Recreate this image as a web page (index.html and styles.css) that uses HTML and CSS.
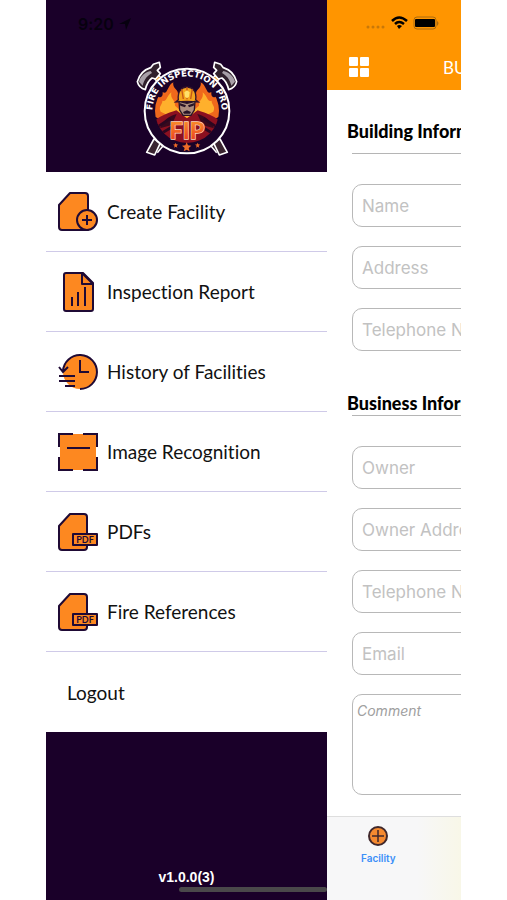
FILE: index.html
```
<!DOCTYPE html>
<html lang="en">
<head>
  <meta charset="UTF-8" />
  <meta name="viewport" content="width=device-width, initial-scale=1.0" />
  <title>Fire Inspection Pro</title>
  <link rel="stylesheet" href="styles.css">
</head>
<body>
  <div class="phone">
    <nav class="drawer">
      <header class="drawer-header">
        <div class="clock">
          <span>9:20</span>
          <svg width="12" height="12" viewBox="0 0 12 12"><path d="M0 6 12 0 7 12 6 6z" fill="#07000f"/></svg>
        </div>
        <svg class="logo" viewBox="0 0 342 330" role="img" aria-label="Fire Inspection Pro">
          <defs>
            <path id="ring" d="M72 200A104 104 0 1 1 270 200"/>
            <clipPath id="disc"><circle cx="171" cy="168" r="96"/></clipPath>
            <linearGradient id="flame" x1="0" y1="0" x2="0" y2="1">
              <stop offset="0" stop-color="#ffa02e"/>
              <stop offset="1" stop-color="#e8331b"/>
            </linearGradient>
          </defs>
          <!-- crossed axes -->
          <g stroke-linejoin="round">
            <g id="axe">
              <path d="M80 66 266 288" stroke="#fff" stroke-width="20"/>
              <path d="M80 66 266 288" stroke="#3a2430" stroke-width="11"/>
              <path d="M77 63 96 86" stroke="#f5a020" stroke-width="12"/>
              <path d="M250 262 268 300 292 292 270 252z" fill="#3a2430" stroke="#fff" stroke-width="5"/>
              <path d="M70 28 88 22 91 37 82 46 91 56 77 72 66 69C54 78 49 90 46 104 34 101 25 93 22 80 28 60 42 44 62 38z" fill="#30202c" stroke="#fff" stroke-width="5"/>
              <path d="M27 80C32 62 46 51 62 48L66 54C52 62 43 72 38 92z" fill="#a79fa7"/>
            </g>
            <use href="#axe" transform="matrix(-1 0 0 1 342 0)"/>
          </g>
          <circle cx="171" cy="168" r="127" fill="#1a0329" stroke="#fff" stroke-width="6"/>
          <g clip-path="url(#disc)">
            <path d="M75 185C65 150 84 142 80 122 94 132 99 125 98 111 112 122 111 93 130 80 126 103 146 101 144 120L171 150 198 120C196 101 216 103 212 80 231 93 230 122 244 111 243 125 248 132 262 122 258 142 277 150 267 185L210 215H132z" fill="#ef681c"/>
            <path d="M92 170C84 153 98 149 97 137 111 142 108 126 124 112 120 133 136 134 135 152L171 184 207 152C206 134 222 133 218 112 234 126 231 142 245 137 244 149 258 153 250 170L210 190H132z" fill="#ffb02c"/>
            <path d="M60 225C67 192 95 181 139 166L171 190 203 166C247 181 275 192 282 225L250 270H92z" fill="#8b1020"/>
            <path d="M90 220C100 195 120 181 140 177L125 210zM252 220C242 195 222 181 202 177L217 210z" fill="#39091d"/>
            <path d="M76 220 121 190M266 220 221 190M86 240 126 216M256 240 216 216" stroke="#2b0720" stroke-width="8"/>
          </g>
          <path d="M145 134C142 108 156 96 171 96S201 108 197 134L205 141 171 139 137 141z" fill="#f5a51e" stroke="#34132a" stroke-width="4"/>
          <path d="M171 96V133M155 102 160 132M187 102 182 132" stroke="#c45518" stroke-width="4"/>
          <path d="M163 112 171 106 179 112 177 125 171 130 165 125z" fill="#ffe06a"/>
          <path d="M147 139 171 145 195 139 193 165 183 181H159L149 165z" fill="#ac8d7e" stroke="#281426" stroke-width="4"/>
          <path d="M149 144 168 151 165 157 151 152zM193 144 174 151 177 157 191 152zM159 171 171 166 183 171 180 176H162z" fill="#281426"/>
          <text class="ring-text"><textPath href="#ring" startOffset="50%">FIRE INSPECTION PRO</textPath></text>
          <text class="fip" x="171" y="251">FIP</text>
          <g fill="#ef6c28">
            <path d="m170 262 4 9 10 1-8 7 3 10-9-5-9 5 3-10-8-7 10-1z"/>
            <path d="m137 263 2 5 6 1-5 3 2 6-5-3-5 3 2-6-5-3 6-1zM203 263l2 5 6 1-5 3 2 6-5-3-5 3 2-6-5-3 6-1z"/>
          </g>
        </svg>
      </header>

      <ul class="menu">
        <li><a href="#create">
          <svg class="icon" viewBox="0 0 40 40">
            <path class="shape" d="M12 1H27Q30 1 30 4V38H4Q1 38 1 35V13z"/>
            <circle class="shape" cx="29" cy="28" r="10"/>
            <path class="stroke" d="M29 23V33M24 28H34"/>
          </svg>Create Facility</a></li>
        <li><a href="#report">
          <svg class="icon" viewBox="0 0 40 40">
            <path class="shape" d="M8 1H25L35 11V37Q35 39 33 39H8Q6 39 6 37V3Q6 1 8 1z"/>
            <path class="shape" d="M24 1V12H35z"/>
            <path class="stroke" d="M14 25V34M20 20V34M27 15V34"/>
          </svg>Inspection Report</a></li>
        <li><a href="#history">
          <svg class="icon" viewBox="0 0 40 40">
            <circle cx="22" cy="20" r="17" fill="#fd8820"/>
            <path class="stroke" d="M5 19A17 17 0 1 1 22 37M1 15 5 20 10 15M22 8V20H31M1 24H17M1 29H17M7 34H17"/>
          </svg>History of Facilities</a></li>
        <li><a href="#image">
          <svg class="icon" viewBox="0 0 40 40">
            <path d="M2 2H38V38H2z" fill="#fd8820"/>
            <path class="stroke" d="M15 2H1V15M25 2H39V15M1 25V38H15M25 38H39V25M9 16H32"/>
          </svg>Image Recognition</a></li>
        <li><a href="#pdfs">
          <svg class="icon" viewBox="0 0 40 40">
            <path class="shape" d="M12 2H26Q29 2 29 5V35Q29 38 26 38H4Q1 38 1 35V14z"/>
            <path class="shape" d="M15 22H39V33H15z"/>
            <text class="pdf" x="27" y="31">PDF</text>
          </svg>PDFs</a></li>
        <li><a href="#references">
          <svg class="icon" viewBox="0 0 40 40">
            <path class="shape" d="M12 2H26Q29 2 29 5V35Q29 38 26 38H4Q1 38 1 35V14z"/>
            <path class="shape" d="M15 22H39V33H15z"/>
            <text class="pdf" x="27" y="31">PDF</text>
          </svg>Fire References</a></li>
        <li><a class="logout" href="#logout">Logout</a></li>
      </ul>

      <footer class="version">v1.0.0(3)</footer>
      <div class="home-bar"></div>
    </nav>

    <main class="page">
      <header class="topbar">
        <div class="status">
          <svg width="74" height="16" viewBox="0 0 74 16">
            <g fill="#c87808"><circle cx="2" cy="12" r="1.5"/><circle cx="7" cy="12" r="1.5"/><circle cx="12" cy="12" r="1.5"/><circle cx="17" cy="12" r="1.5"/></g>
            <g fill="none" stroke="#000" stroke-width="2.5"><path d="M26 6Q33 -1 41 6M29 9Q33 5 38 9"/></g>
            <path d="M31 11Q33 9 36 11L33 14z"/>
            <rect x="48" y="2" width="22" height="12" rx="3" fill="none" stroke="#a96a10" stroke-width="1"/>
            <rect x="49" y="4" width="20" height="8" rx="1"/>
            <path d="M71 6Q74 8 71 11z" fill="#a96a10"/>
          </svg>
        </div>
        <div class="titlebar">
          <button class="grid-button" type="button" aria-label="Menu">
            <svg width="20" height="20" viewBox="0 0 20 20" fill="#fff"><rect width="9" height="9" rx="1"/><rect x="11" width="9" height="9" rx="1"/><rect y="11" width="9" height="9" rx="1"/><rect x="11" y="11" width="9" height="9" rx="1"/></svg>
          </button>
          <h1>BUILDING</h1>
        </div>
      </header>

      <form class="form">
        <h2>Building Information</h2>
        <div class="fields">
          <input type="text" placeholder="Name" aria-label="Name">
          <input type="text" placeholder="Address" aria-label="Address">
          <input type="tel" placeholder="Telephone Number" aria-label="Telephone Number">
        </div>
        <h2 class="tight">Business Information</h2>
        <div class="fields">
          <input type="text" placeholder="Owner" aria-label="Owner">
          <input type="text" placeholder="Owner Address" aria-label="Owner Address">
          <input type="tel" placeholder="Telephone Number" aria-label="Owner Telephone Number">
          <input type="email" placeholder="Email" aria-label="Email">
          <textarea placeholder="Comment" aria-label="Comment"></textarea>
        </div>
      </form>

      <nav class="tabbar">
        <a class="tab" href="#facility">
          <svg width="22" height="22" viewBox="0 0 22 22"><circle cx="11" cy="11" r="9" fill="#f58a30" stroke="#40282c" stroke-width="2"/><path d="M11 5V17M5 11H17" stroke="#40282c" stroke-width="1.5"/></svg>
          Facility
        </a>
      </nav>
    </main>
  </div>
</body>
</html>
```

FILE: styles.css
```
* {
  box-sizing: border-box;
}
body {
  margin: 0;
  padding: 0 46px;
  background: #fff;
  font-family: Lato, "Liberation Sans", sans-serif;
  font-variant-ligatures: none;
  color: #111;
}
.phone {
  display: flex;
  min-height: 100vh;
  overflow: hidden;
}

/* side menu */
.drawer {
  position: relative;
  display: flex;
  flex-direction: column;
  flex: 0 0 281px;
  background: #1a0029;
}
.drawer-header {
  display: flex;
  flex-direction: column;
  height: 172px;
  padding-top: 12px;
}
.clock {
  display: flex;
  align-items: center;
  gap: 5px;
  height: 24px;
  padding-left: 32px;
  font-family: Inter, sans-serif;
  font-size: 16px;
  font-weight: 600;
  color: #07000f;
}
.logo {
  width: 114px;
  height: 110px;
  margin: 19px auto 0;
}
.ring-text {
  font-family: "DejaVu Sans", sans-serif;
  font-size: 26px;
  font-weight: 700;
  fill: #fff;
  text-anchor: middle;
}
.fip {
  font-size: 70px;
  font-weight: 900;
  fill: url(#flame);
  stroke: #f9d9bd;
  stroke-width: 4px;
  paint-order: stroke;
  text-anchor: middle;
}
.menu {
  margin: 0;
  padding: 0;
  list-style: none;
  background: #fff;
}
.menu li {
  height: 80px;
  border-bottom: 1px solid #cfcae8;
}
.menu li:last-child {
  border-bottom: none;
}
.menu a {
  display: flex;
  align-items: center;
  gap: 9px;
  height: 100%;
  padding-left: 12px;
  font-size: 19px;
  color: #111;
  text-decoration: none;
}
.menu .logout {
  padding-left: 21px;
}
.icon {
  width: 40px;
  height: 40px;
  overflow: visible;
}
.shape {
  fill: #fd8820;
  stroke: #1f0a35;
  stroke-width: 2px;
  stroke-linejoin: round;
}
.stroke {
  fill: none;
  stroke: #1f0a35;
  stroke-width: 2px;
}
.pdf {
  font-size: 9px;
  font-weight: 700;
  fill: #1f0a35;
  text-anchor: middle;
}
.version {
  margin-top: auto;
  padding-bottom: 15px;
  font-family: "Liberation Sans", sans-serif;
  font-size: 14px;
  font-weight: 700;
  line-height: 16px;
  color: #fff;
  text-align: center;
}
.home-bar {
  position: absolute;
  right: 0;
  bottom: 8px;
  width: 148px;
  height: 5px;
  border-radius: 3px;
  background: #4a484a;
}

/* page pushed aside by the menu */
.page {
  display: flex;
  flex-direction: column;
  flex: 0 0 100%;
}
.topbar {
  height: 90px;
  background: #ff9500;
}
.status {
  height: 46px;
  padding: 15px 0 0 39px;
}
.status svg {
  display: block;
}
.titlebar {
  display: flex;
  align-items: center;
  gap: 74px;
  height: 42px;
  padding-left: 22px;
}
.grid-button {
  display: flex;
  padding: 0;
  border: none;
  background: none;
}
.titlebar h1 {
  margin: 0;
  font-size: 17px;
  font-weight: 400;
  color: #fff;
}
.form {
  padding: 29px 25px 20px;
}
.form h2 {
  margin: 0 0 30px;
  padding-bottom: 10px;
  border-bottom: 1px solid #b5b5b5;
  font-size: 18px;
  font-weight: 900;
  line-height: 24px;
  color: #000;
  text-indent: -5px;
}
.form h2.tight {
  margin-top: 40px;
  padding-bottom: 0;
}
.fields {
  display: flex;
  flex-direction: column;
  gap: 19px;
}
.fields input,
.fields textarea {
  width: 100%;
  height: 43px;
  padding: 0 9px;
  border: 1px solid #b8b8b8;
  border-radius: 10px;
  background: #fff;
  font-family: Inter, sans-serif;
  font-size: 17px;
}
.fields textarea {
  height: 101px;
  padding: 7px 4px;
  font-size: 14px;
  font-style: italic;
  resize: none;
}
.fields ::placeholder {
  color: #c2c2c2;
}
.fields textarea::placeholder {
  color: #a0a0a0;
}
.tabbar {
  height: 84px;
  margin-top: auto;
  padding: 8px 0 0 34px;
  border-top: 1px solid #dedede;
  background: linear-gradient(90deg, #f7f7f8 90px, #f8f7e8 134px);
}
.tab {
  display: inline-flex;
  flex-direction: column;
  align-items: center;
  gap: 5px;
  font-family: Inter, sans-serif;
  font-size: 10px;
  font-weight: 600;
  color: #3c90f8;
  text-decoration: none;
}
```
